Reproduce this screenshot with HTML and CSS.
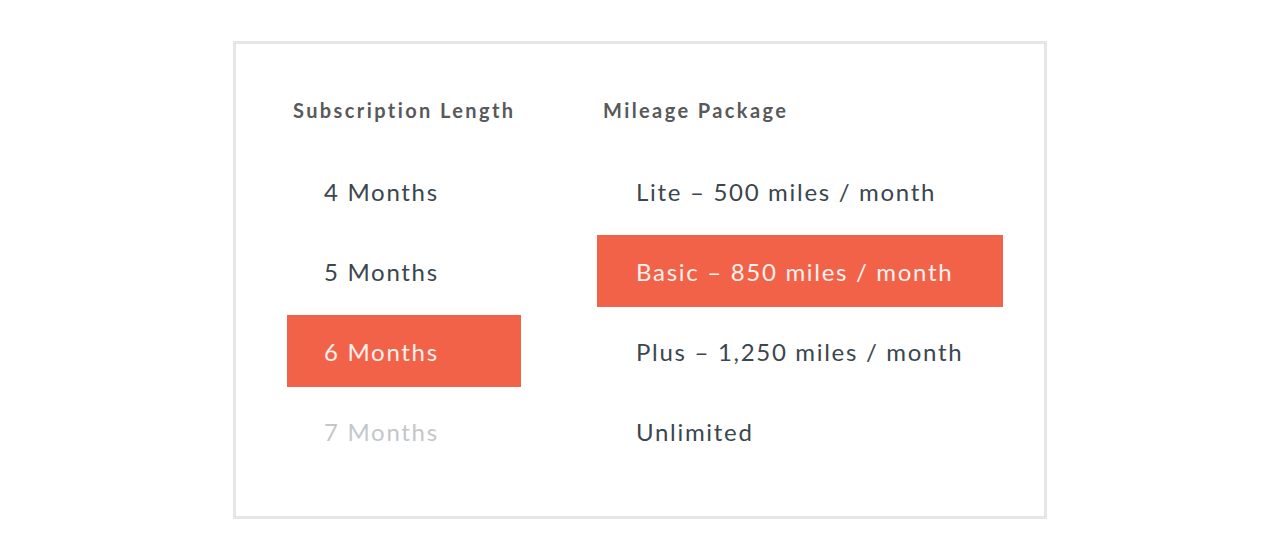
FILE: index.html
```html
<!DOCTYPE html>
<html>
<head>
<meta charset="utf-8">
<link rel="stylesheet" href="styles.css">
</head>
<body>
<div class="card">
  <div class="col col-length">
    <div class="heading">Subscription Length</div>
    <ul class="list">
      <li class="item">4 Months</li>
      <li class="item">5 Months</li>
      <li class="item selected">6 Months</li>
      <li class="item faded">7 Months</li>
    </ul>
  </div>
  <div class="col col-mileage">
    <div class="heading">Mileage Package</div>
    <ul class="list">
      <li class="item">Lite – 500 miles / month</li>
      <li class="item selected">Basic – 850 miles / month</li>
      <li class="item">Plus – 1,250 miles / month</li>
      <li class="item">Unlimited</li>
    </ul>
  </div>
</div>
</body>
</html>
```
FILE: styles.css
```css
html, body {
  margin: 0;
  padding: 0;
  background: #ffffff;
}
body {
  font-family: Lato, "Open Sans", sans-serif;
  padding: 41px 0 0 233px;
}
.card {
  box-sizing: border-box;
  width: 814px;
  height: 478px;
  border: 3px solid #e6e6e6;
  display: flex;
  gap: 76px;
  padding: 54px 0 0 51px;
}
.col-length { width: 234px; }
.col-mileage { width: 406px; }
.heading {
  font-size: 20px;
  line-height: 24px;
  font-weight: 700;
  color: #58595b;
  letter-spacing: 2.4px;
  padding-left: 6px;
  white-space: nowrap;
}
.list {
  list-style: none;
  margin: 33px 0 0 0;
  padding: 0;
  display: flex;
  flex-direction: column;
  gap: 8px;
}
.item {
  height: 72px;
  display: flex;
  align-items: center;
  padding-left: 37px;
  font-size: 24px;
  letter-spacing: 1.7px;
  color: #3b464e;
  white-space: nowrap;
}
.col-mileage .item { padding-left: 39px; }
.item.selected {
  background: #f26249;
  color: #fdf1ee;
}
.item.faded { color: #c3c7ca; }
```
